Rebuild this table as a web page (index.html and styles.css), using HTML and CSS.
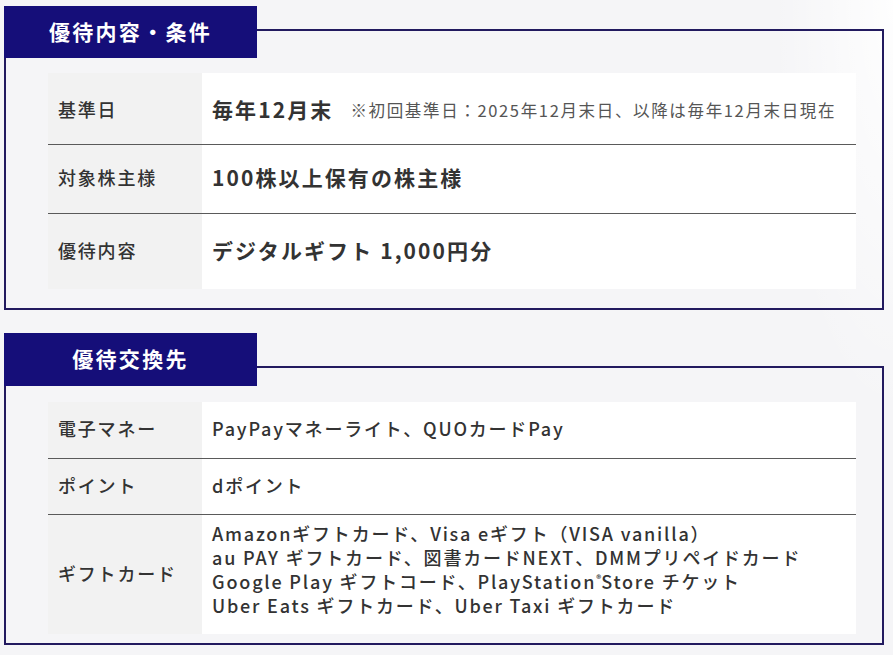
FILE: index.html
```html
<!DOCTYPE html>
<html lang="ja">
<head>
<meta charset="utf-8">
<title>株主優待</title>
<link rel="stylesheet" href="styles.css">
</head>
<body>
<div class="page">
  <section class="section section-first">
    <h2 class="tab">優待内容・条件</h2>
    <div class="box box-first">
      <div class="table">
        <div class="row row-a">
          <div class="th">基準日</div>
          <div class="td big">毎年12月末<span class="note">※初回基準日：2025年12月末日、以降は毎年12月末日現在</span></div>
        </div>
        <div class="row row-b">
          <div class="th">対象株主様</div>
          <div class="td big">100株以上保有の株主様</div>
        </div>
        <div class="row row-c">
          <div class="th">優待内容</div>
          <div class="td big">デジタルギフト 1,000円分</div>
        </div>
      </div>
    </div>
  </section>

  <section class="section section-second">
    <h2 class="tab">優待交換先</h2>
    <div class="box box-second">
      <div class="table">
        <div class="row row-d">
          <div class="th">電子マネー</div>
          <div class="td">PayPayマネーライト、QUOカードPay</div>
        </div>
        <div class="row row-e">
          <div class="th">ポイント</div>
          <div class="td">dポイント</div>
        </div>
        <div class="row row-f">
          <div class="th">ギフトカード</div>
          <div class="td lines">
            <span>Amazonギフトカード、Visa eギフト（VISA vanilla）</span>
            <span>au PAY ギフトカード、図書カードNEXT、DMMプリペイドカード</span>
            <span>Google Play ギフトコード、PlayStation<sup>®</sup>Store チケット</span>
            <span>Uber Eats ギフトカード、Uber Taxi ギフトカード</span>
          </div>
        </div>
      </div>
    </div>
  </section>
</div>
</body>
</html>
```

FILE: styles.css
```css
html, body {
  margin: 0;
  padding: 0;
}

body {
  width: 893px;
  height: 655px;
  overflow: hidden;
  background:
    radial-gradient(ellipse 120px 420px at 100% 0%, rgba(255,255,255,0.9), rgba(255,255,255,0) 100%),
    #f5f5f7;
  font-family: "Noto Sans CJK JP", "Noto Sans", sans-serif;
  color: #333;
}

.page {
  padding: 6px 0 0 4px;
  display: flex;
  flex-direction: column;
  gap: 23px;
}

.section {
  width: 880px;
  display: flex;
  flex-direction: column;
}

.tab {
  position: relative;
  z-index: 1;
  margin: 0;
  width: 253px;
  height: 52px;
  background: #150e79;
  color: #fff;
  font-size: 21px;
  font-weight: 700;
  letter-spacing: 0.11em;
  display: flex;
  align-items: center;
  justify-content: center;
  padding: 0 0 3px 0;
  box-sizing: border-box;
}

.section-second .tab {
  height: 53px;
}

.box {
  border: 2px solid #221a5f;
  box-sizing: border-box;
  padding: 0 25px 0 42px;
}

.box-first {
  margin-top: -29px;
  height: 281px;
  padding-top: 42px;
}

.box-second {
  margin-top: -20px;
  height: 279px;
  padding-top: 34px;
}

.table {
  width: 808px;
  display: flex;
  flex-direction: column;
}

.row {
  display: grid;
  grid-template-columns: 154px 1fr;
  border-bottom: 1px solid #5a5a5a;
}

.row:last-child {
  border-bottom: none;
}

.th,
.td {
  display: flex;
  align-items: center;
  padding: 0 0 4px 10px;
  font-size: 18px;
  font-weight: 500;
  letter-spacing: 0.1em;
  color: #333;
}

.th {
  background: #f2f2f2;
}

.td {
  background: #fff;
  white-space: nowrap;
}

.row-a .th,
.row-a .td {
  padding-bottom: 0;
}

.td.big {
  font-size: 21px;
  font-weight: 700;
}

.note {
  font-size: 16.5px;
  font-weight: 400;
  color: #555;
  margin-left: 17px;
  letter-spacing: 0.1em;
  padding-top: 3px;
}

.row-a { height: 71px; }
.row-b { height: 68px; }
.row-c { height: 75px; }

.row-d { height: 56px; }
.row-e { height: 55px; }
.row-f { height: 119px; }

.td.lines {
  flex-direction: column;
  align-items: flex-start;
  justify-content: center;
  line-height: 24px;
  letter-spacing: 0.1em;
  padding-bottom: 12px;
}

.lines span {
  display: block;
}

sup {
  font-size: 10px;
  vertical-align: 6px;
  line-height: 0;
  letter-spacing: 0;
}
```
